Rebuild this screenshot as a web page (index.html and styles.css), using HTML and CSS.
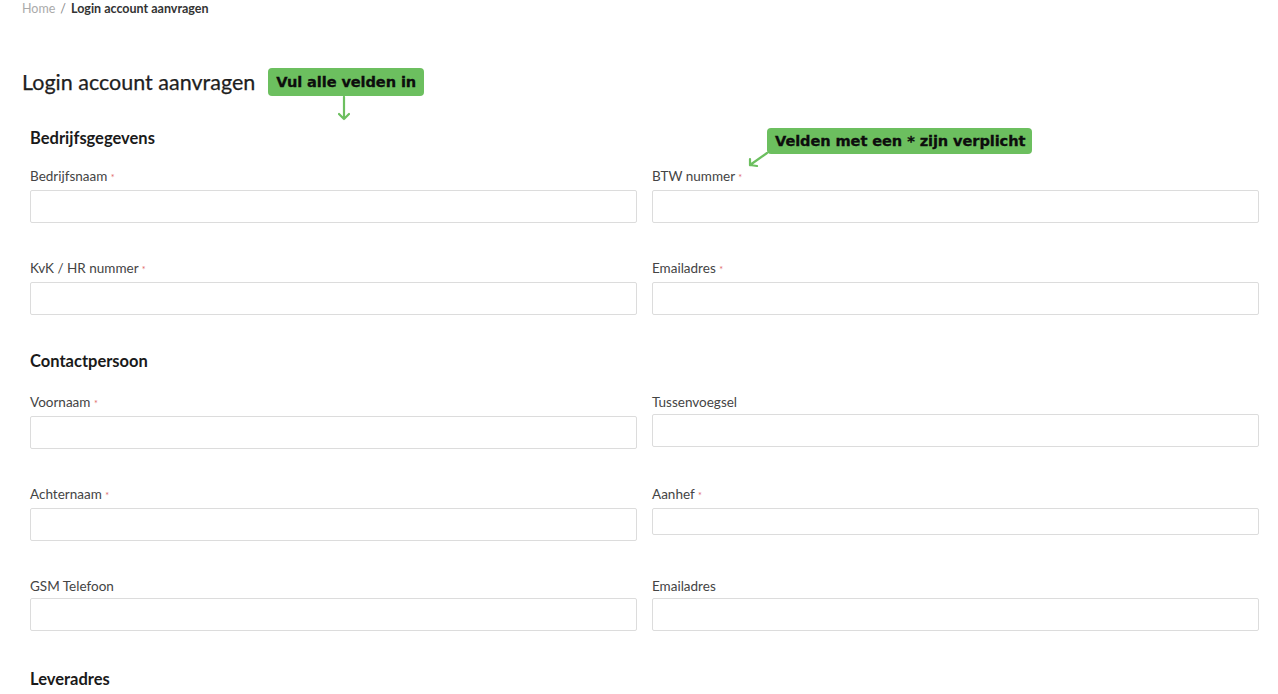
FILE: index.html
```html
<!DOCTYPE html>
<html lang="nl">
<head>
<meta charset="utf-8">
<title>Login account aanvragen</title>
<link rel="stylesheet" href="styles.css">
</head>
<body>
<div class="page">
  <nav class="breadcrumb"><span class="crumb-home">Home</span><span class="crumb-sep">/</span><span class="crumb-current">Login account aanvragen</span></nav>

  <div class="title-row">
    <h1 class="title">Login account aanvragen</h1>
    <div class="badge badge-fill">Vul alle velden in
      <svg class="arrow-down" width="12" height="26" viewBox="0 0 12 26"><path d="M6 1 V23 M1 18 L6 23 L11 18" fill="none" stroke="#6cbf5f" stroke-width="2.2" stroke-linecap="round" stroke-linejoin="round"/></svg>
    </div>
  </div>

  <form class="form">
    <section class="section">
      <h2 class="section-title">Bedrijfsgegevens</h2>
      <div class="badge badge-required">Velden met een * zijn verplicht
        <svg class="arrow-diag" width="22" height="16" viewBox="0 0 22 16"><path d="M20 1 L3 13 M3 7 L3 13 L10 14" fill="none" stroke="#6cbf5f" stroke-width="2.2" stroke-linecap="round" stroke-linejoin="round"/></svg>
      </div>
      <div class="grid">
        <div class="field"><label class="label">Bedrijfsnaam <span class="req">*</span></label><input class="input" type="text"></div>
        <div class="field"><label class="label">BTW nummer <span class="req">*</span></label><input class="input" type="text"></div>
        <div class="field"><label class="label">KvK / HR nummer <span class="req">*</span></label><input class="input" type="text"></div>
        <div class="field"><label class="label">Emailadres <span class="req">*</span></label><input class="input" type="text"></div>
      </div>
    </section>

    <section class="section section-contact">
      <h2 class="section-title">Contactpersoon</h2>
      <div class="grid">
        <div class="field"><label class="label">Voornaam <span class="req">*</span></label><input class="input" type="text"></div>
        <div class="field"><label class="label">Tussenvoegsel</label><input class="input" type="text"></div>
        <div class="field"><label class="label">Achternaam <span class="req">*</span></label><input class="input" type="text"></div>
        <div class="field"><label class="label">Aanhef <span class="req">*</span></label><div class="input input-short"></div></div>
        <div class="field"><label class="label">GSM Telefoon</label><input class="input" type="text"></div>
        <div class="field"><label class="label">Emailadres</label><input class="input" type="text"></div>
      </div>
    </section>

    <section class="section section-delivery">
      <h2 class="section-title">Leveradres</h2>
    </section>
  </form>
</div>
</body>
</html>
```

FILE: styles.css
```css
* { box-sizing: border-box; }
html, body { margin: 0; padding: 0; background: #fff; }
body {
  font-family: "Lato", "Open Sans", sans-serif;
  color: #222;
  overflow: hidden;
}
.page {
  padding: 1px 19px 0 22px;
}
.breadcrumb {
  font-size: 12.5px;
  line-height: 15px;
  color: #999;
}
.crumb-home { color: #aaa; }
.crumb-sep { margin: 0 5px; color: #888; }
.crumb-current { color: #333; font-weight: 700; }

.title-row {
  display: flex;
  align-items: center;
  gap: 13px;
  margin-top: 52px;
  height: 28px;
}
.title {
  margin: 0;
  font-size: 21.5px;
  font-weight: 400;
  color: #1e1e1e;
  line-height: 28px;
  -webkit-text-stroke: 0.25px #1e1e1e;
}
.badge {
  position: relative;
  background: #6cbf5f;
  color: #0d0d0d;
  font-family: "DejaVu Sans", "Inter", sans-serif;
  font-weight: 700;
  border-radius: 4px;
  white-space: nowrap;
  -webkit-text-stroke: 0.3px #0d0d0d;
}
.badge-fill {
  font-size: 14.6px;
  line-height: 28px;
  padding: 0 8px;
  height: 28px;
  letter-spacing: -0.1px;
}
.arrow-down {
  position: absolute;
  left: 70px;
  top: 28px;
}
.form {
  padding-left: 8px;
}
.section {
  position: relative;
}
.section-title {
  margin: 32px 0 20px;
  font-size: 16.5px;
  line-height: 20px;
  font-weight: 700;
  color: #1a1a1a;
}
.section-contact .section-title {
  margin-top: 36px;
  margin-bottom: 23px;
}
.section-delivery .section-title {
  margin-top: 38px;
}
.badge-required {
  position: absolute;
  left: 737px;
  top: 0;
  height: 26px;
  line-height: 26px;
  font-size: 14.6px;
  padding: 0 7px 0 8px;
  letter-spacing: -0.1px;
}
.arrow-diag {
  position: absolute;
  left: -20px;
  top: 24px;
}
.grid {
  display: grid;
  grid-template-columns: 607px 607px;
  column-gap: 15px;
  row-gap: 37px;
}
.field {
  display: flex;
  flex-direction: column;
  gap: 4px;
  align-items: stretch;
}
.label {
  font-size: 13.5px;
  line-height: 16px;
  color: #444;
}
.req {
  color: #e06a6a;
  font-size: 9px;
}
.input {
  display: block;
  height: 33px;
  width: 100%;
  margin: 0;
  border: 1px solid #dcdcdc;
  border-radius: 2px;
  background: #fff;
  padding: 0 8px;
  font: inherit;
}
.input-short {
  height: 27px;
  margin-bottom: 6px;
}
```
